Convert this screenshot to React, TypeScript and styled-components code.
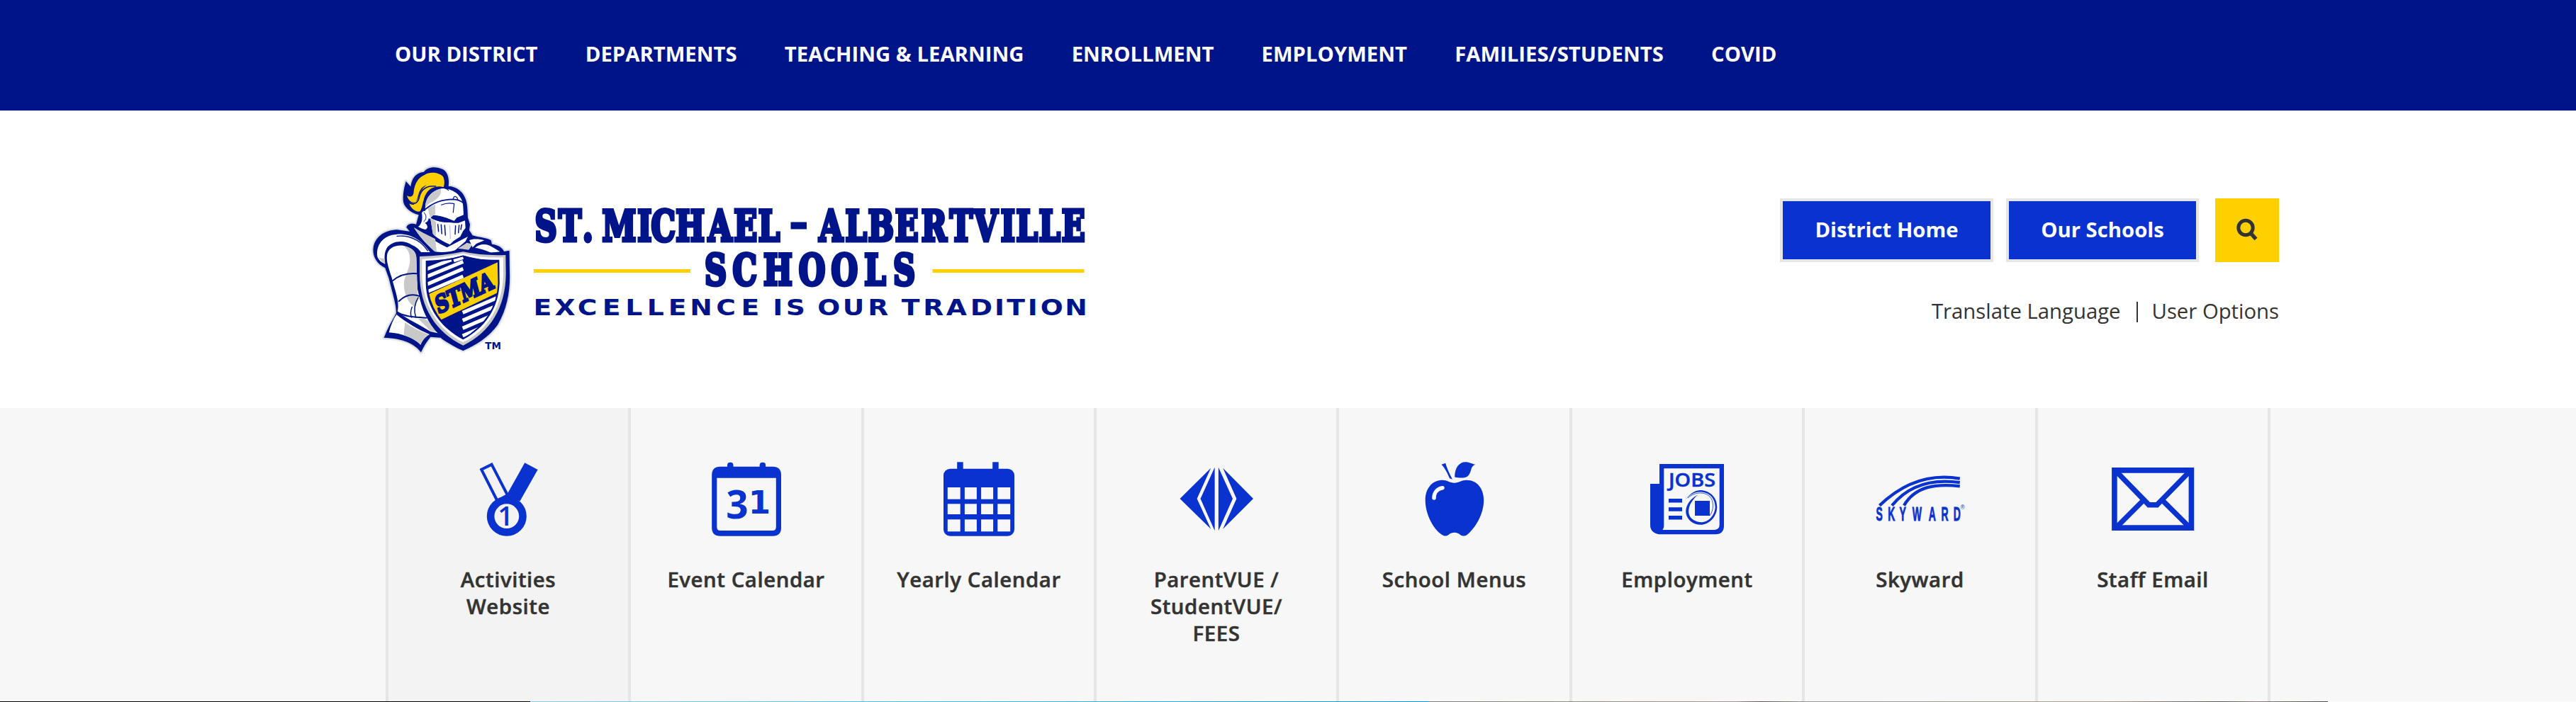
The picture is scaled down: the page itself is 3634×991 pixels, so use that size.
import React from "react";
import styled, { createGlobalStyle } from "styled-components";

const NAVY = "#001489";
const BLUE = "#0a32cf";
const GOLD = "#ffd000";
const INK = "#333333";
const PALE = "#f7f7f7";
const LINE = "#e6e6e6";

const GlobalStyle = createGlobalStyle`
  *, *::before, *::after { box-sizing: border-box; }
  body { margin: 0; background: #fff; color: ${INK}; font-family: "Open Sans", sans-serif; }
  a { color: inherit; text-decoration: none; }
  svg { display: block; overflow: visible; }
`;

const Page = styled.div`
  display: flex;
  flex-direction: column;
  width: 100%;
  height: 991px;
  overflow: hidden;
`;

const TopNav = styled.nav`
  display: flex;
  align-items: center;
  gap: 67.15px;
  height: 156px;
  padding: 0 0 4px 557px;
  background: ${NAVY};
`;

const NavLink = styled.a`
  color: #fff;
  font-size: 29.3px;
  font-weight: 700;
  line-height: 40px;
  white-space: nowrap;
`;

const Header = styled.header`
  display: flex;
  justify-content: space-between;
  height: 420px;
  padding: 64px 419px 0 510px;
`;

const HeaderSide = styled.div`
  display: flex;
  flex-direction: column;
  align-items: flex-end;
  padding-top: 60px;
`;

const Actions = styled.div`
  display: flex;
`;

const ActionButton = styled.button<{ $width: number; $gap: number }>`
  width: ${(p) => p.$width}px;
  height: 90px;
  margin: 0 ${(p) => p.$gap}px 0 0;
  padding: 0 0 3px;
  border: 4px solid ${LINE};
  background: ${BLUE};
  color: #fff;
  font: 700 29.3px/40px "Open Sans", sans-serif;
  white-space: nowrap;
`;

const SearchButton = styled.button`
  width: 90px;
  height: 90px;
  padding: 0;
  border: 0;
  background: ${GOLD};
`;

const Utilities = styled.div`
  display: flex;
  align-items: center;
  height: 40px;
  margin-top: 49px;
  line-height: 40px;
`;

const UtilityLink = styled.a`
  font-size: 29.3px;
  white-space: nowrap;
`;

const Divider = styled.span`
  width: 2px;
  height: 29px;
  margin: 3px 20px 0 22px;
  background: ${INK};
`;

const QuickLinks = styled.section`
  display: flex;
  height: 414px;
  padding-left: 544px;
  background: ${PALE};
`;

const QuickLink = styled.a<{ $width: number; $first?: boolean }>`
  display: flex;
  flex-direction: column;
  align-items: center;
  width: ${(p) => p.$width}px;
  padding-top: 64px;
  border-right: 4px solid ${LINE};
  border-left: ${(p) => (p.$first ? `4px solid ${LINE}` : "0")};
  background: ${(p) => (p.$first ? "#f3f3f3" : PALE)};
`;

const QuickLabel = styled.span`
  margin-top: 29px;
  font-size: 29.4px;
  font-weight: 600;
  line-height: 38px;
  letter-spacing: 0.55px;
  text-align: center;
  white-space: pre-line;
  -webkit-text-stroke: 0.5px ${INK};
`;

const BannerEdge = styled.div`
  display: flex;
  height: 1px;
`;

const BannerSlice = styled.div<{ $width: number; $fill: string }>`
  width: ${(p) => p.$width}px;
  background: ${(p) => p.$fill};
`;

type LetteringProps = {
  word: string;
  centers: number[];
  y: number;
  size: number;
  stretch: number;
  family: string;
  outline?: number;
};

/* One word of the wordmark, each letter centred on its own position. */
const Lettering = ({ word, centers, y, size, stretch, family, outline = 0 }: LetteringProps) => (
  <text
    transform={`scale(${stretch} 1)`}
    x={centers.map((c) => (c / stretch).toFixed(1)).join(" ")}
    y={y}
    textAnchor="middle"
    fontFamily={family}
    fontWeight={700}
    fontSize={size}
    fill={NAVY}
    stroke={NAVY}
    strokeWidth={outline}
  >
    {word}
  </text>
);

const SLAB = '"DejaVu Serif", serif';
const WIDE = '"DejaVu Sans", sans-serif';

const Knight = () => (
  <g transform="scale(0.33333)" strokeLinejoin="round" strokeLinecap="round">
    <defs>
      <path
        id="knight-body"
        d="M188 108 L208 130 C212 95 232 70 264 68 C278 48 312 42 345 58 C365 70 372 96 368 128 C402 130 430 152 440 182 C448 200 449 235 450 262 L459 290 L456 315 L470 337 C500 347 530 346 548 358 L552 374 C580 378 598 390 604 407 L625 402 L626 470 C632 560 620 640 577 715 C540 768 480 805 430 824 C390 806 350 785 335 770 L292 767 C275 787 262 810 252 832 C228 800 180 772 95 770 C108 735 128 700 146 668 C150 640 133 590 116 520 L100 475 C60 455 46 420 50 390 C56 345 95 315 150 313 L204 320 L190 303 C195 286 215 285 231 290 L242 250 C205 240 176 215 176 185 C176 150 182 130 188 108 Z"
      />
      <clipPath id="shield-field">
        <path d="M278 448 Q360 448 430 424 Q500 448 578 444 L580 540 C576 640 520 725 430 774 C340 725 282 640 278 540 Z" />
      </clipPath>
    </defs>
    <use href="#knight-body" fill="none" stroke="#8a8f9c" strokeOpacity="0.14" strokeWidth="18" />
    <use href="#knight-body" fill="none" stroke="#8a8f9c" strokeOpacity="0.25" strokeWidth="9" />
    <use href="#knight-body" fill={NAVY} />

    {/* plume */}
    <path fill={GOLD} d="M192 168 C206 176 216 174 220 160 C222 122 238 92 268 80 C290 66 328 70 345 88 C352 102 352 120 347 133 C322 124 288 134 274 160 C258 184 262 212 248 235 C232 240 210 226 202 202 C222 214 238 204 243 180 C246 158 256 136 276 124 C240 134 244 170 232 190 C222 204 200 196 192 168 Z" />
    <path fill={GOLD} d="M204 196 C224 204 240 190 246 160 L270 150 L262 190 L240 215 Z" />
    <path fill="none" stroke={NAVY} strokeWidth="5" d="M203 198 C228 210 240 196 245 172 C252 144 275 124 314 129" />

    {/* helmet */}
    <path fill="#fff" d="M270 225 C268 178 300 142 345 138 C392 140 428 170 430 212 L432 250 L404 262 L392 276 C360 262 330 250 302 252 L288 268 C276 256 268 240 270 225 Z" />
    <path fill="#c9c9c9" d="M270 225 C268 178 296 148 336 141 C338 165 326 180 298 196 C280 204 272 214 270 225 Z M280 220 L312 207 L312 248 L290 260 Z" />
    <path fill="none" stroke={NAVY} strokeWidth="5" d="M268 228 C300 200 340 184 388 184 C408 185 420 190 431 200" />
    <path fill="none" stroke={NAVY} strokeWidth="3.5" d="M338 208 Q365 196 392 203 L388 240 M322 138 Q350 128 368 146 M388 184 C390 168 402 168 408 186" />
    <path fill="#fff" d="M255 242 C262 228 278 232 283 250 C288 272 278 282 268 284 C280 292 284 306 270 312 C258 310 246 304 240 300 C254 290 260 268 255 242 Z" />
    <path fill="none" stroke={NAVY} strokeWidth="3" d="M264 240 C276 250 276 270 264 278" />
    <path fill="#fff" d="M291 262 C320 282 360 280 392 284 L410 284 L438 274 L440 306 L430 318 L418 342 L390 360 L374 376 C345 362 312 345 302 330 Z" />
    <path fill="#c9c9c9" d="M291 262 L316 280 L314 342 L302 330 Z" />
    <path fill={NAVY} d="M304 252 C338 256 366 266 392 276 L404 262 L436 252 L436 270 C420 282 400 284 390 280 C365 285 330 282 304 266 Z" />
    <path fill="none" stroke={NAVY} strokeWidth="4.5" d="M323 290 L326 320 M337 292 L340 330 M352 294 L355 336 M398 296 L396 332 M413 294 L410 326 M424 292 L420 312" />
    <path fill="none" stroke={NAVY} strokeWidth="3" d="M374 296 L376 350" opacity="0.35" />

    {/* collar and shoulders */}
    <path fill="#fff" d="M222 304 C262 330 310 362 362 388 L450 342 L440 362 L396 400 C370 408 340 410 312 406 C290 388 246 344 222 304 Z" />
    <path fill="#c9c9c9" d="M222 304 C254 324 290 340 312 352 L318 404 L308 404 C280 380 240 338 222 304 Z M408 392 L446 368 L470 374 L454 398 Z" />
    <path fill="#fff" d="M456 358 C470 350 500 352 520 358 L486 372 L470 388 L462 370 Z M480 390 C504 368 534 372 560 390 L586 406 L550 410 C525 402 505 392 480 390 Z" />
    <path fill="#fff" d="M68 430 C58 380 90 336 150 332 C205 330 245 348 290 408 L252 408 C238 390 228 384 214 378 C178 354 128 360 106 392 C94 415 98 440 100 458 C84 452 73 442 68 430 Z" />
    <path fill="#c9c9c9" d="M160 336 C205 334 242 350 262 378 C235 362 205 344 160 336 Z M74 432 C84 448 92 452 100 456 L98 436 Z" />
    <path fill="none" stroke={NAVY} strokeWidth="4" d="M150 340 C200 336 246 352 280 402" />

    {/* arm */}
    <path fill="#fff" d="M108 420 C112 392 140 376 176 380 C214 388 230 408 232 430 L236 560 C250 630 290 700 330 752 L292 744 C240 712 190 690 152 660 C164 620 138 560 128 516 C118 484 104 450 108 420 Z" />
    <path fill="#c9c9c9" d="M176 380 C214 388 232 406 232 430 L238 590 L226 640 C195 622 176 580 180 530 C192 490 210 460 204 430 C204 408 192 392 176 380 Z M240 690 C264 684 278 694 296 712 L322 746 L292 742 Z" />
    <path fill="none" stroke={NAVY} strokeWidth="6" d="M130 530 C160 505 198 496 234 499 M158 616 C184 590 216 584 246 594 M152 662 C184 684 240 682 274 686" />
    <path fill="none" stroke={NAVY} strokeWidth="4.5" d="M240 600 C222 630 222 660 230 684 M214 640 C206 660 208 676 212 684" />
    <path fill="#fff" d="M148 672 C190 706 240 736 288 756 C268 768 256 784 250 800 C220 770 170 752 116 748 C124 718 134 692 148 672 Z" />
    <path fill="#c9c9c9" d="M184 706 C220 730 250 744 284 756 C268 768 256 784 250 800 C232 784 208 768 178 760 Z" />

    {/* shield */}
    <path fill={NAVY} d="M236 412 Q340 420 430 398 Q520 420 625 402 L626 470 C634 625 560 770 430 825 C300 770 234 650 236 500 Z" />
    <path fill="#c9c9c9" d="M246 426 Q345 424 430 406 Q515 424 610 420 L611 500 C610 640 545 748 430 803 C315 748 246 640 246 500 Z" />
    <path fill="#fff" d="M256 438 Q355 430 430 413 Q510 434 600 430 L600 500 C598 634 536 738 430 790 C325 738 258 634 256 500 Z" />
    <path fill={NAVY} d="M272 444 Q355 442 430 422 Q502 444 583 440 L584 540 C580 645 522 730 430 778 C338 730 274 645 272 540 Z" />
    <g clipPath="url(#shield-field)">
      <g stroke="#fff" strokeWidth="15" strokeLinecap="butt">
        <path d="M270 482 L380 440 M270 514 L430 448 M270 547 L430 478 M270 579 L430 510 M390 444 L430 430" />
        <path d="M428 664 L600 590 M428 697 L600 623 M428 730 L600 656 M428 762 L600 688" />
      </g>
      <path fill={NAVY} d="M432 420 H600 V470 L432 530 Z" />
      <path fill={GOLD} d="M270 592 L590 444 L590 573 L328 698 L290 650 Z" />
    </g>
    <path fill="none" stroke={NAVY} strokeWidth="5" d="M278 448 Q360 446 430 424 Q500 446 578 444 L580 540 C576 640 520 725 430 774 C340 725 282 640 278 540 Z" />
    <text
      transform="translate(324 670) rotate(-25) skewX(-10)"
      fontFamily={SLAB}
      fontWeight={700}
      fontSize="98"
      textLength="264"
      lengthAdjust="spacingAndGlyphs"
      fill={NAVY}
      stroke={NAVY}
      strokeWidth="9"
      strokeLinejoin="miter"
    >
      STMA
    </text>
    <text x="523" y="819" fontFamily={WIDE} fontWeight={700} fontSize="42" textLength="68" lengthAdjust="spacingAndGlyphs" fill={NAVY}>
      TM
    </text>
  </g>
);

const Logo = () => (
  <svg width="1030" height="290" viewBox="0 0 1030 290" role="img" aria-label="St. Michael - Albertville Schools">
    <Knight />
    <Lettering word="ST." centers={[260, 294, 319.3]} y={119.8} size={60} stretch={0.72} family={SLAB} outline={5} />
    <Lettering word="MICHAEL" centers={[363.3, 399.3, 425.7, 463.7, 505.7, 541.7, 575]} y={119.8} size={60} stretch={0.72} family={SLAB} outline={5} />
    <rect x="605.5" y="93.5" width="22.5" height="10" fill={NAVY} />
    <Lettering word="ALBERTVILLE" centers={[662.3, 697.7, 732.7, 769.3, 807.7, 845.7, 880.7, 911.7, 938.7, 970.7, 1004.3]} y={119.8} size={60} stretch={0.72} family={SLAB} outline={5} />
    <rect x="243" y="160" width="221" height="5" fill={GOLD} />
    <rect x="805.5" y="160" width="214" height="5" fill={GOLD} />
    <Lettering word="SCHOOLS" centers={[499.7, 540.7, 587.3, 635.7, 681.3, 724.3, 765.7]} y={182.2} size={60} stretch={0.72} family={SLAB} outline={5} />
    <Lettering word="EXCELLENCE" centers={[255.3, 287, 318.7, 352.7, 384.3, 414.7, 445.7, 479, 514, 548.3]} y={224.7} size={32.5} stretch={1.16} family={WIDE} />
    <Lettering word="IS" centers={[587.3, 612.3]} y={224.7} size={32.5} stretch={1.16} family={WIDE} />
    <Lettering word="OUR" centers={[659.3, 694, 728.7]} y={224.7} size={32.5} stretch={1.16} family={WIDE} />
    <Lettering word="TRADITION" centers={[774.7, 806.7, 839.3, 874.3, 900, 923.3, 946.7, 973.7, 1008]} y={224.7} size={32.5} stretch={1.16} family={WIDE} />
  </svg>
);

const Icon = ({ children }: { children: React.ReactNode }) => (
  <svg width="130" height="130" viewBox="0 0 130 130" fill={BLUE} aria-hidden="true">
    {children}
  </svg>
);

const MedalIcon = () => (
  <Icon>
    <path d="M88.3 13.3 L106.6 23 L81.6 67.3 L61 62 Z" />
    <path fill="none" stroke={BLUE} strokeWidth="4" d="M27.2 22.8 L41.6 15.6 L64 59 L49.5 67 Z" />
    <circle cx="62.8" cy="88.7" r="22.7" fill="#f3f3f3" stroke={BLUE} strokeWidth="10.6" />
    <text x="61" y="101.9" textAnchor="middle" fontFamily='"Open Sans", sans-serif' fontWeight={600} fontSize="38">1</text>
  </Icon>
);

const EventCalendarIcon = () => (
  <Icon>
    <path fillRule="evenodd" d="M28 18.7 H102 Q114 18.7 114 31 V105 Q114 116.7 102 116.7 H28 Q16.2 116.7 16.2 105 V31 Q16.2 18.7 28 18.7 Z M23.3 34.7 V104 Q23.3 109 28 109 H102 Q106.8 109 106.8 104 V34.7 Z" />
    <rect x="38" y="12.7" width="8.5" height="12" rx="4" />
    <rect x="83.6" y="12.7" width="8.5" height="12" rx="4" />
    <text x="52" y="92.3" textAnchor="middle" fontFamily='"Open Sans", sans-serif' fontWeight={700} fontSize="55">3</text>
    <text x="83.4" y="85" textAnchor="middle" fontFamily={WIDE} fontWeight={700} fontSize="45">1</text>
  </Icon>
);

const COLS = [[20.8, 17.9], [44.9, 17], [68.1, 17], [91.3, 17.9]];
const ROWS = [[48, 16.7], [71.3, 14.7], [93.3, 17]];

const YearCalendarIcon = () => (
  <Icon>
    <rect x="15" y="21.7" width="100" height="95" rx="9.5" />
    <rect x="34.2" y="12.3" width="8.5" height="12" />
    <rect x="84.2" y="12.3" width="8.5" height="12" />
    {ROWS.map(([y, h]) => COLS.map(([x, w]) => <rect key={`${x}-${y}`} x={x} y={y} width={w} height={h} fill={PALE} />))}
  </Icon>
);

const DiamondIcon = () => (
  <Icon>
    <path d="M13.5 64 L57.2 20.7 L37.6 64 L57.2 106.7 Z" />
    <path d="M62.6 19.7 L42.5 64 L62.6 109.3 Z" />
    <path d="M67.9 19.7 L88 64 L67.9 109.3 Z" />
    <path d="M74.2 20.7 L117 64 L74.2 106.7 L93.4 64 Z" />
  </Icon>
);

const AppleIcon = () => (
  <Icon>
    <path d="M64.7 41.7 C58 41.5 55 37.7 47.8 37.7 C33 37.7 23.7 50 23.7 66 C23.7 88 37 109 47.5 115 C51 117.3 54 117 57 114.5 C61.5 110.8 68 110.8 72.5 114.5 C75.5 117 79 117.3 82.5 115 C94 106 106.2 86 106.2 66 C106.2 50 97 37.7 82 37.7 C74.5 37.7 71 41.5 64.7 41.7 Z" />
    <path fill="none" stroke={PALE} strokeWidth="5.5" strokeLinecap="round" d="M36 63 C36 55 41 50 48 48.7" />
    <path d="M46.4 15.7 L52.2 13.7 C54 21 58 29 62 36.7 L58 35.2 C55 28 51 20 46.4 15.7 Z" />
    <path d="M65.2 33.5 C65 20 72 12.3 80 12.3 C85.5 12.3 88 14.5 94.2 15.7 C90.5 17 89 20 88.6 22 C87 28 85.5 31 82 33.3 C78 35.4 70 34.6 65.2 33.5 Z" />
  </Icon>
);

const JobsIcon = () => (
  <Icon>
    <path fillRule="evenodd" d="M26 15 H117 V102 Q117 114.3 105 114.3 H25 Q13 112 13 101 V43 H26 Z M32.3 21.3 V103 Q32 106 30.3 108 H104 Q110.7 107 110.7 101 V21.3 Z" />
    <text x="39" y="47" fontFamily='"Open Sans", sans-serif' fontWeight={600} fontSize="27.8" textLength="66" lengthAdjust="spacingAndGlyphs" stroke={BLUE} strokeWidth="0.5">JOBS</text>
    <rect x="39" y="64" width="19" height="5.5" />
    <rect x="39" y="76.2" width="19" height="5.5" />
    <rect x="39" y="88" width="19" height="5.5" />
    <rect x="76" y="67" width="21" height="21" />
    <path d="M80 58.5 C68 65 62 75 63.5 85 C66 96 76 101.5 86 100.7 C98 99.5 107 88 107.3 76 C107.5 62 97 52 83 52 C75 52.5 67 58 61.5 68 C66 60 74 54.5 83 54.5 C97 54.5 104.5 64 104.7 76 C104 87 96 96.8 86 97.2 C76 97 68.5 92 67.3 84 C66.5 74 72 66 80 58.5 Z" />
    <path fill="none" stroke={BLUE} strokeWidth="0.8" d="M66 63 C76 54 90 54 97 61 C103 67 103 80 97 88" />
  </Icon>
);

const SkywardIcon = () => (
  <Icon>
    <g fill="none" stroke={BLUE} strokeWidth="4.3">
      <path d="M7.5 73.6 C43 39.5 80 28.5 120.8 35.6" />
      <path d="M25 73.6 C50 43 84 36 120.8 41.1" />
      <path d="M42 73.6 C58 46 88 42.5 120.8 46.3" />
    </g>
    <text
      transform="scale(0.5 1)"
      x="14.5 48.5 80.5 120.5 163.5 199 233.5"
      y="95.3"
      textAnchor="middle"
      fontFamily='"Liberation Sans", sans-serif'
      fontWeight={700}
      fontSize="28"
      stroke={BLUE}
      strokeWidth="0.9"
    >
      SKYWARD
    </text>
    <text x="121.5" y="79" fontFamily='"Liberation Sans", sans-serif' fontSize="8.5">®</text>
  </Icon>
);

const EnvelopeIcon = () => (
  <Icon>
    <path fillRule="evenodd" d="M7.1 20 H123.2 V109 H7.1 Z M14.7 27.7 V101.3 H115.6 V27.7 Z" />
    <g fill="none" stroke={BLUE} strokeWidth="7.4">
      <path d="M13 25 L59.3 72.7 H71 L117.5 25" />
      <path d="M52.5 65.5 L13 105 M77.8 65.5 L117.5 105" />
    </g>
  </Icon>
);

const NAV = ["OUR DISTRICT", "DEPARTMENTS", "TEACHING & LEARNING", "ENROLLMENT", "EMPLOYMENT", "FAMILIES/STUDENTS", "COVID"];

const LINKS = [
  { label: "Activities\nWebsite", width: 346, icon: <MedalIcon /> },
  { label: "Event Calendar", width: 329, icon: <EventCalendarIcon /> },
  { label: "Yearly Calendar", width: 328, icon: <YearCalendarIcon /> },
  { label: "ParentVUE /\nStudentVUE/\nFEES", width: 342, icon: <DiamondIcon /> },
  { label: "School Menus", width: 329, icon: <AppleIcon /> },
  { label: "Employment", width: 328, icon: <JobsIcon /> },
  { label: "Skyward", width: 329, icon: <SkywardIcon /> },
  { label: "Staff Email", width: 328, icon: <EnvelopeIcon /> },
];

export default function App() {
  return (
    <Page>
      <GlobalStyle />
      <TopNav>
        {NAV.map((item) => (
          <NavLink key={item} href="#">{item}</NavLink>
        ))}
      </TopNav>
      <Header>
        <Logo />
        <HeaderSide>
          <Actions>
            <ActionButton $width={301} $gap={18}>District Home</ActionButton>
            <ActionButton $width={272} $gap={23}>Our Schools</ActionButton>
            <SearchButton aria-label="Search">
              <svg width="90" height="90" viewBox="0 0 90 90" fill="none" stroke={INK}>
                <circle cx="43" cy="41.5" r="10.2" strokeWidth="5" />
                <path d="M49.5 48.5 L57.5 57.5" strokeWidth="5.5" />
              </svg>
            </SearchButton>
          </Actions>
          <Utilities>
            <UtilityLink href="#">Translate Language</UtilityLink>
            <Divider />
            <UtilityLink href="#">User Options</UtilityLink>
          </Utilities>
        </HeaderSide>
      </Header>
      <QuickLinks>
        {LINKS.map((link, i) => (
          <QuickLink key={link.label} href="#" $width={link.width} $first={i === 0}>
            {link.icon}
            <QuickLabel>{link.label}</QuickLabel>
          </QuickLink>
        ))}
      </QuickLinks>
      <BannerEdge>
        <BannerSlice $width={748} $fill="#000" />
        <BannerSlice $width={1267} $fill="linear-gradient(90deg, #8fcfe8, #4fb3dc 45%, #1590c8)" />
        <BannerSlice $width={1269} $fill="linear-gradient(90deg, #857d7b, #9b9693 34%, #5a5453 37%, #9c9590 42%, #a89e90 75%, #5e5555 88%, #8a7f7b 92%, #4f4848)" />
      </BannerEdge>
    </Page>
  );
}
